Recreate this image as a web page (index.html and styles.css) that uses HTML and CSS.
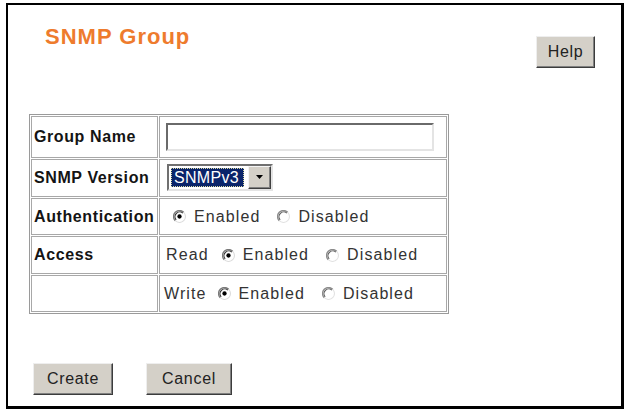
FILE: index.html
```html
<!DOCTYPE html>
<html lang="en">
<head>
<meta charset="utf-8">
<title>SNMP Group</title>
<link rel="stylesheet" href="styles.css">
</head>
<body>
<div class="frame">
  <div class="header">
    <h1 class="title">SNMP Group</h1>
    <button class="btn btn-help" type="button">Help</button>
  </div>

  <table class="form">
    <tr class="r1">
      <td class="key">Group Name</td>
      <td class="val"><input class="text" type="text"></td>
    </tr>
    <tr class="r2">
      <td class="key">SNMP Version</td>
      <td class="val">
        <div class="select">
          <span class="sel-val">SNMPv3</span>
          <span class="sel-btn"><svg width="8" height="5" viewBox="0 0 8 5"><path d="M0 0H7L3.5 4Z" fill="#000"/></svg></span>
        </div>
      </td>
    </tr>
    <tr class="r3">
      <td class="key">Authentication</td>
      <td class="val">
        <div class="opts">
          <span class="opt"><svg class="radio" viewBox="0 0 12 12"><circle cx="6" cy="6" r="5.5" fill="#fff"/><path d="M2.1 9.9A5.5 5.5 0 0 1 9.9 2.1" stroke="#7a7a7a" stroke-width="1.3" fill="none"/><path d="M2.9 9.1A4.4 4.4 0 0 1 9.1 2.9" stroke="#303030" stroke-width="1" fill="none"/><path d="M9.9 2.1A5.5 5.5 0 0 1 2.1 9.9" stroke="#dcdcdc" stroke-width="1" fill="none"/><circle cx="6" cy="6" r="2" fill="#000"/></svg>Enabled</span>
          <span class="opt"><svg class="radio" viewBox="0 0 12 12"><circle cx="6" cy="6" r="5.5" fill="#fff"/><path d="M2.1 9.9A5.5 5.5 0 0 1 9.9 2.1" stroke="#8c8c8c" stroke-width="1.3" fill="none"/><path d="M2.9 9.1A4.4 4.4 0 0 1 9.1 2.9" stroke="#5a5a5a" stroke-width="1" fill="none"/><path d="M9.9 2.1A5.5 5.5 0 0 1 2.1 9.9" stroke="#e2e2e2" stroke-width="1" fill="none"/></svg>Disabled</span>
        </div>
      </td>
    </tr>
    <tr class="r4">
      <td class="key">Access</td>
      <td class="val">
        <div class="opts">
          <span class="lbl">Read</span>
          <span class="opt"><svg class="radio" viewBox="0 0 12 12"><circle cx="6" cy="6" r="5.5" fill="#fff"/><path d="M2.1 9.9A5.5 5.5 0 0 1 9.9 2.1" stroke="#7a7a7a" stroke-width="1.3" fill="none"/><path d="M2.9 9.1A4.4 4.4 0 0 1 9.1 2.9" stroke="#303030" stroke-width="1" fill="none"/><path d="M9.9 2.1A5.5 5.5 0 0 1 2.1 9.9" stroke="#dcdcdc" stroke-width="1" fill="none"/><circle cx="6" cy="6" r="2" fill="#000"/></svg>Enabled</span>
          <span class="opt"><svg class="radio" viewBox="0 0 12 12"><circle cx="6" cy="6" r="5.5" fill="#fff"/><path d="M2.1 9.9A5.5 5.5 0 0 1 9.9 2.1" stroke="#8c8c8c" stroke-width="1.3" fill="none"/><path d="M2.9 9.1A4.4 4.4 0 0 1 9.1 2.9" stroke="#5a5a5a" stroke-width="1" fill="none"/><path d="M9.9 2.1A5.5 5.5 0 0 1 2.1 9.9" stroke="#e2e2e2" stroke-width="1" fill="none"/></svg>Disabled</span>
        </div>
      </td>
    </tr>
    <tr class="r5">
      <td class="key"></td>
      <td class="val">
        <div class="opts">
          <span class="lbl lbl-w">Write</span>
          <span class="opt"><svg class="radio" viewBox="0 0 12 12"><circle cx="6" cy="6" r="5.5" fill="#fff"/><path d="M2.1 9.9A5.5 5.5 0 0 1 9.9 2.1" stroke="#7a7a7a" stroke-width="1.3" fill="none"/><path d="M2.9 9.1A4.4 4.4 0 0 1 9.1 2.9" stroke="#303030" stroke-width="1" fill="none"/><path d="M9.9 2.1A5.5 5.5 0 0 1 2.1 9.9" stroke="#dcdcdc" stroke-width="1" fill="none"/><circle cx="6" cy="6" r="2" fill="#000"/></svg>Enabled</span>
          <span class="opt"><svg class="radio" viewBox="0 0 12 12"><circle cx="6" cy="6" r="5.5" fill="#fff"/><path d="M2.1 9.9A5.5 5.5 0 0 1 9.9 2.1" stroke="#8c8c8c" stroke-width="1.3" fill="none"/><path d="M2.9 9.1A4.4 4.4 0 0 1 9.1 2.9" stroke="#5a5a5a" stroke-width="1" fill="none"/><path d="M9.9 2.1A5.5 5.5 0 0 1 2.1 9.9" stroke="#e2e2e2" stroke-width="1" fill="none"/></svg>Disabled</span>
        </div>
      </td>
    </tr>
  </table>

  <div class="actions">
    <button class="btn btn-create" type="button">Create</button>
    <button class="btn btn-cancel" type="button">Cancel</button>
  </div>
</div>
</body>
</html>
```

FILE: styles.css
```css
html, body {
  margin: 0;
  padding: 0;
  background: #fff;
}

body {
  font-family: "Liberation Sans", Arial, sans-serif;
}

.frame {
  margin: 3px 0 0 6px;
  width: 618px;
  height: 406px;
  box-sizing: border-box;
  border: 2px solid #000;
  border-right-width: 3px;
  border-bottom-width: 3px;
  padding: 0 26px 0 21px;
}

.header {
  display: flex;
  justify-content: space-between;
  align-items: flex-start;
}

.title {
  margin: 19px 0 0 16px;
  font-size: 22px;
  line-height: 26px;
  font-weight: bold;
  letter-spacing: 1px;
  color: #ee7b2d;
}

.btn {
  box-sizing: border-box;
  height: 32px;
  padding: 0;
  margin: 0;
  background: #d4d0c8;
  border: 1px solid;
  border-color: #eeeeee #3c3c3c #3c3c3c #eeeeee;
  box-shadow: inset -1px -1px 0 #808080;
  font-family: "Liberation Sans", Arial, sans-serif;
  font-size: 16px;
  letter-spacing: 0.7px;
  color: #222;
}

.btn-help {
  width: 59px;
  margin-top: 31px;
}

.form {
  margin-top: 46px;
  width: 420px;
  border-collapse: separate;
  border-spacing: 1px;
  border: 1px solid #9a9a9a;
  table-layout: fixed;
}

.form td {
  box-sizing: border-box;
  border: 1px solid #a8a8a8;
  padding: 0;
  vertical-align: middle;
}

.form .key {
  width: 127px;
  padding-left: 2px;
  font-size: 16px;
  font-weight: bold;
  letter-spacing: 0.6px;
  color: #141414;
}

.form .val {
  width: 288px;
  padding-left: 6px;
  font-size: 16px;
  letter-spacing: 1.1px;
  color: #333;
}

.r1 td { height: 42px; }
.r2 td { height: 38px; }
.r3 td { height: 37px; }
.r4 td { height: 38px; }
.r5 td { height: 37px; }

.text {
  display: block;
  box-sizing: border-box;
  width: 268px;
  height: 28px;
  margin: 0;
  border: 2px solid;
  border-color: #6a6a6a #e4e4e4 #e4e4e4 #6a6a6a;
  background: #fff;
}

.select {
  display: flex;
  align-items: center;
  box-sizing: border-box;
  width: 106px;
  height: 27px;
  margin: -2px 0 0 1px;
  border: 2px solid;
  border-color: #707070 #e4e4e4 #e4e4e4 #707070;
  background: #fff;
  padding: 0 0 0 2px;
}

.sel-val {
  box-sizing: border-box;
  width: 73px;
  height: 19px;
  line-height: 17px;
  padding-left: 2px;
  background: #0a246a;
  color: #fff;
  border: 1px dotted #d8d8a0;
  font-size: 16px;
  letter-spacing: 0.3px;
}

.sel-btn {
  box-sizing: border-box;
  margin-left: auto;
  width: 23px;
  height: 23px;
  background: #d4d0c8;
  border: 1px solid;
  border-color: #f4f4f4 #404040 #404040 #f4f4f4;
  box-shadow: inset -1px -1px 0 #808080;
  display: flex;
  align-items: center;
  justify-content: center;
}

.opts {
  display: flex;
  align-items: center;
}

.opt {
  display: inline-flex;
  align-items: center;
}

.opt + .opt {
  margin-left: 10px;
}

.radio {
  width: 13px;
  height: 13px;
  margin: 0 8px 0 7px;
  flex: none;
}

.lbl {
  margin-right: 6px;
}

.lbl-w {
  margin-left: -2px;
  margin-right: 4px;
}

.actions {
  display: flex;
  gap: 33px;
  margin: 49px 0 0 4px;
}

.btn-create {
  width: 80px;
}

.btn-cancel {
  width: 86px;
}
```
